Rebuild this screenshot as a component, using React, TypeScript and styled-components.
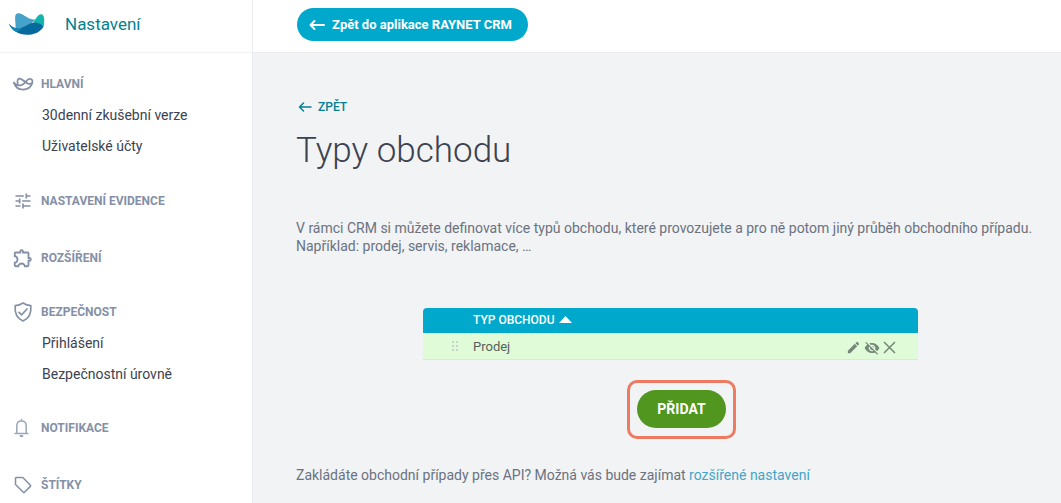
import React from 'react';
import styled, { createGlobalStyle } from 'styled-components';
import { MdTune, MdOutlineExtension, MdEdit, MdVisibilityOff } from 'react-icons/md';

const GlobalStyle = createGlobalStyle`
  *, *::before, *::after { box-sizing: border-box; }
  body {
    margin: 0;
    background: #f1f3f5;
    color: #3c4250;
    font-family: Roboto, "Liberation Sans", sans-serif;
    font-size: 14px;
  }
  h1, h2, p, ul { margin: 0; padding: 0; }
  a { text-decoration: none; }
  button { font-family: inherit; border: 0; cursor: pointer; }
  svg { display: block; flex: none; }
`;

const Layout = styled.div`
  display: grid;
  grid-template-columns: 253px minmax(0, 1fr);
  min-height: 100vh;
`;

const Sidebar = styled.aside`
  background: #fff;
  border-right: 1px solid #e9ebee;
`;

const Brand = styled.div`
  display: flex;
  align-items: center;
  gap: 20px;
  height: 53px;
  padding: 0 8px 4px;
  border-bottom: 1px solid #f0f1f3;
  color: #04828f;
  font-size: 17px;
`;

const Nav = styled.nav`
  padding-top: 15px;
`;

const Section = styled.section<{ $tail: number }>`
  padding-bottom: ${(p) => p.$tail}px;
`;

const SectionTitle = styled.h2`
  display: flex;
  align-items: center;
  height: 32px;
  padding-left: 12px;
  color: #8490a6;
  font-size: 12px;
  font-weight: 700;
`;

const IconSlot = styled.span`
  display: flex;
  justify-content: center;
  width: 22px;
  margin-right: 7px;
`;

const Links = styled.ul`
  list-style: none;
`;

const NavLink = styled.a`
  display: block;
  padding-left: 42px;
  line-height: 31px;
  color: #3c4250;
`;

const Main = styled.main`
  min-width: 0;
`;

const TopBar = styled.header`
  height: 53px;
  padding: 8px 44px;
  background: #fff;
  border-bottom: 1px solid #e9ebee;
`;

const AppButton = styled.button`
  display: flex;
  align-items: center;
  gap: 7px;
  height: 33px;
  padding: 0 16px 0 12px;
  border-radius: 17px;
  background: #00a8cc;
  color: #fff;
  font-size: 13px;
  font-weight: 700;
`;

const Content = styled.div`
  padding: 45px 0 0 43px;
`;

const BackLink = styled.a`
  display: inline-flex;
  align-items: center;
  gap: 6px;
  padding-left: 2px;
  line-height: 18px;
  color: #048093;
  font-size: 12px;
  font-weight: 500;
`;

const Title = styled.h1`
  margin-top: 13px;
  font-size: 35px;
  line-height: 44px;
  font-weight: 300;
`;

const Text = styled.p`
  line-height: 18px;
  color: #6b7280;
`;

const Intro = styled(Text)`
  margin-top: 46px;
`;

const InlineLink = styled.a`
  color: #44a5c8;
`;

const TableArea = styled.div`
  padding-right: 16px;
  margin-top: 53px;
`;

const Table = styled.table`
  width: 100%;
  max-width: 495px;
  margin: 0 auto;
  border-spacing: 0;
  overflow: hidden;
  border-radius: 4px 4px 0 0;
`;

const HeadCell = styled.th`
  height: 25px;
  padding: 0 0 2px;
  background: #00a8cc;
  color: #fff;
  font-size: 12px;
  font-weight: 500;
  text-align: left;
`;

const SortLabel = styled.span`
  display: flex;
  align-items: center;
  gap: 4px;
`;

const Cell = styled.td`
  height: 27px;
  padding: 0;
  background: #dffbd8;
  border-bottom: 1px solid #d9ead8;
  color: #56605c;
  font-size: 13px;
`;

const HandleCell = styled(Cell)`
  width: 50px;
  padding-left: 28px;
`;

const Actions = styled.div`
  display: flex;
  align-items: center;
  justify-content: flex-end;
  gap: 3px;
  padding: 3px 22px 0 0;
`;

const IconButton = styled.button`
  padding: 0;
  background: none;
  color: #76877a;
`;

const AddArea = styled.div`
  display: flex;
  justify-content: center;
  padding-left: 6px;
  margin-top: 20px;
`;

const Highlight = styled.div`
  padding: 7px 7px 8px;
  border: 3px solid #ee7a62;
  border-radius: 10px;
`;

const AddButton = styled.button`
  display: block;
  height: 38px;
  padding: 0 20px;
  border-radius: 19px;
  background: #51961e;
  color: #fff;
  font-size: 14px;
  font-weight: 700;
`;

const Footnote = styled(Text)`
  margin-top: 27px;
  padding-bottom: 18px;
`;

const Logo = () => (
  <svg width="37" height="24" viewBox="0 0 37 24" aria-hidden="true">
    <path d="M7.500 17 C8 12 6.500 6 7.500 3 C8.500 .8 11.500 1 14 2.200 C18 4.200 21.500 7.600 27.500 7.500 C25 9.500 24 11 22 13 L14 18 Z" fill="#45a3c9" />
    <path d="M25 10.500 C27.500 7.500 29.500 2.500 33 2.200 C36.500 2.300 36.800 8 35.600 14.500 C33 12.500 29 11 25 10.500Z" fill="#12b5ae" />
    <path d="M.8 11.500 C4 15.500 8 17.200 13 16 C18 14.500 21 10.800 27 10.500 C31 10.600 34 12.500 35.600 14.500 C32.500 20 26.500 22.800 19.500 22.800 C10 22.800 4 18.500 .8 11.500Z" fill="#076a9f" />
    <path d="M.8 11.500 C3 14.500 5.500 16 8.500 16.500 L14 15.700 C12 18.500 9.500 20 7.500 19.600 C4.500 18 2.200 15 .8 11.500Z" fill="#1687b5" />
  </svg>
);

const FishIcon = () => (
  <svg width="22" height="14" viewBox="0 0 22 14" fill="none" stroke="currentColor" strokeWidth="1.800" strokeLinecap="round" strokeLinejoin="round" aria-hidden="true">
    <path d="M1.800 5.500 C3 8 6.500 9 10 7.800 C13.500 6.300 14.800 1.800 17.800 1.800 C20.400 1.800 20.900 4.200 20 6.700 C18.500 10.500 15 12.600 11 12.600 C6.500 12.600 3.200 10 1.800 5.500Z" />
    <path d="M5.800 8 C5.300 5 5 2 7 1.600 C9.500 1.300 12 4 14 5.500 C16 7 18 7.300 20 6.400" />
  </svg>
);

const ShieldIcon = () => (
  <svg width="20" height="22" viewBox="0 0 20 22" fill="none" stroke="currentColor" strokeWidth="1.700" strokeLinecap="round" strokeLinejoin="round" aria-hidden="true">
    <path d="M10 2 C7.500 3.600 5 4.400 2.200 4.600 C1.600 11 2.500 16.800 10 20 C17.500 16.800 18.400 11 17.800 4.600 C15 4.400 12.500 3.600 10 2Z" />
    <path d="M6 11.300 L8.700 13.800 L14 8" />
  </svg>
);

const BellIcon = () => (
  <svg width="20" height="20" viewBox="0 0 20 20" fill="none" stroke="currentColor" strokeWidth="1.500" strokeLinecap="round" strokeLinejoin="round" opacity=".8" aria-hidden="true">
    <path d="M8.500 1.500 V3 M2 15.500 H15 M3.800 15.300 V8 C3.800 4.900 5.800 3.100 8.500 3.100 C11.200 3.100 13.200 4.900 13.200 8 V15.300" />
    <path d="M7.300 17.800 C7.700 18.600 9.300 18.600 9.700 17.800Z" />
  </svg>
);

const TagIcon = () => (
  <svg width="18" height="18" viewBox="0 0 18 18" fill="none" stroke="currentColor" strokeWidth="1.500" strokeLinejoin="round" aria-hidden="true">
    <path d="M1.500 2.200 Q1.500 1.500 2.200 1.500 H8.800 L16.400 9.300 Q16.900 9.900 16.400 10.400 L10.500 16.300 Q9.900 16.800 9.300 16.300 L1.500 8.500Z" />
  </svg>
);

const ArrowLeft = ({ width, weight }: { width: number; weight: number }) => (
  <svg width={width} height="12" viewBox={`0 0 ${width} 12`} fill="none" stroke="currentColor" strokeWidth={weight} strokeLinecap="round" strokeLinejoin="round" aria-hidden="true">
    <path d={`M${width - 1} 6 H1.500 M5.500 2 L1.500 6 L5.500 10`} />
  </svg>
);

const Handle = () => (
  <svg width="8" height="10" viewBox="0 0 8 10" fill="#c8d3cb" aria-hidden="true">
    {[0, 4, 8].map((y) => (
      <g key={y}>
        <rect x="1" y={y} width="2" height="2" />
        <rect x="5" y={y} width="2" height="2" />
      </g>
    ))}
  </svg>
);

interface SectionData {
  title: string;
  icon: React.ReactNode;
  links?: string[];
  tail: number;
}

const sections: SectionData[] = [
  { title: 'HLAVNÍ', icon: <FishIcon />, links: ['30denní zkušební verze', 'Uživatelské účty'], tail: 23 },
  { title: 'NASTAVENÍ EVIDENCE', icon: <MdTune size={20} />, tail: 25 },
  { title: 'ROZŠÍŘENÍ', icon: <MdOutlineExtension size={22} />, tail: 22 },
  { title: 'BEZPEČNOST', icon: <ShieldIcon />, links: ['Přihlášení', 'Bezpečnostní úrovně'], tail: 22 },
  { title: 'NOTIFIKACE', icon: <BellIcon />, tail: 25 },
  { title: 'ŠTÍTKY', icon: <TagIcon />, tail: 0 },
];

export default function App() {
  return (
    <>
      <GlobalStyle />
      <Layout>
        <Sidebar>
          <Brand>
            <Logo />
            <span>Nastavení</span>
          </Brand>
          <Nav>
            {sections.map((s) => (
              <Section key={s.title} $tail={s.tail}>
                <SectionTitle>
                  <IconSlot>{s.icon}</IconSlot>
                  {s.title}
                </SectionTitle>
                {s.links && (
                  <Links>
                    {s.links.map((l) => (
                      <li key={l}>
                        <NavLink href="#">{l}</NavLink>
                      </li>
                    ))}
                  </Links>
                )}
              </Section>
            ))}
          </Nav>
        </Sidebar>
        <Main>
          <TopBar>
            <AppButton type="button">
              <ArrowLeft width={16} weight={2} />
              Zpět do aplikace RAYNET CRM
            </AppButton>
          </TopBar>
          <Content>
            <BackLink href="#">
              <ArrowLeft width={14} weight={1.5} />
              ZPĚT
            </BackLink>
            <Title>Typy obchodu</Title>
            <Intro>
              V rámci CRM si můžete definovat více typů obchodu, které provozujete a pro ně potom jiný průběh obchodního případu.
              <br />
              Například: prodej, servis, reklamace, …
            </Intro>
            <TableArea>
              <Table>
                <thead>
                  <tr>
                    <HeadCell aria-label="Pořadí" />
                    <HeadCell aria-sort="ascending">
                      <SortLabel>
                        TYP OBCHODU
                        <svg width="13" height="7" viewBox="0 0 13 7" fill="currentColor" aria-hidden="true">
                          <path d="M0 7 L6.500 0 L13 7Z" />
                        </svg>
                      </SortLabel>
                    </HeadCell>
                    <HeadCell aria-label="Akce" />
                  </tr>
                </thead>
                <tbody>
                  <tr>
                    <HandleCell>
                      <Handle />
                    </HandleCell>
                    <Cell>Prodej</Cell>
                    <Cell>
                      <Actions>
                        <IconButton type="button" aria-label="Upravit">
                          <MdEdit size={15} />
                        </IconButton>
                        <IconButton type="button" aria-label="Skrýt">
                          <MdVisibilityOff size={16} />
                        </IconButton>
                        <IconButton type="button" aria-label="Smazat">
                          <svg width="13" height="13" viewBox="0 0 13 13" stroke="currentColor" strokeWidth="1.500" aria-hidden="true">
                            <path d="M1 1 L12 12 M12 1 L1 12" />
                          </svg>
                        </IconButton>
                      </Actions>
                    </Cell>
                  </tr>
                </tbody>
              </Table>
            </TableArea>
            <AddArea>
              <Highlight>
                <AddButton type="button">PŘIDAT</AddButton>
              </Highlight>
            </AddArea>
            <Footnote>
              Zakládáte obchodní případy přes API? Možná vás bude zajímat <InlineLink href="#">rozšířené nastavení</InlineLink>
            </Footnote>
          </Content>
        </Main>
      </Layout>
    </>
  );
}
